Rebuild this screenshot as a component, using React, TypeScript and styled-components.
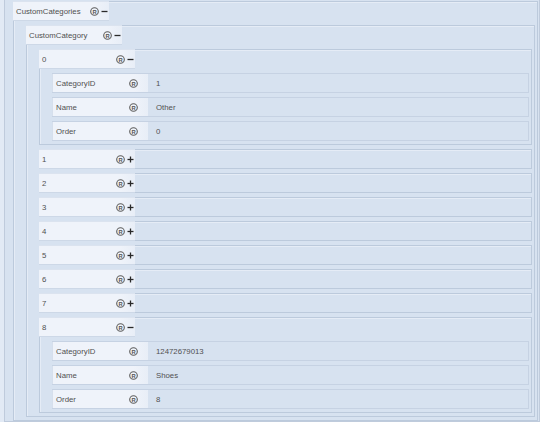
import React from "react";
import styled, { createGlobalStyle } from "styled-components";

const Global = createGlobalStyle`
  html, body { margin: 0; padding: 0; }
  body {
    background: #e2eaf5;
    font-family: "Liberation Sans", Arial, sans-serif;
    width: 540px;
    height: 422px;
    overflow: hidden;
  }
`;

const Frame = styled.div`
  margin-left: 4px;
  width: 536px;
  height: 422px;
  box-sizing: border-box;
  border: 1px solid #bfcbdc;
  border-top: none;
  background: #d7e2f0;
  padding: 1px 1px 2px 8px;
`;

const Box = styled.div`
  border: 1px solid #bccadc;
  box-shadow: inset 1px 1px 0 #e5ecf6;
  background: #d7e2f0;
  display: flex;
  flex-direction: column;
`;

const Header = styled.div`
  height: 20px;
  margin: -1px 0 -1px -1px;
  display: flex;
  position: relative;
`;

const Cell = styled.div`
  width: 96px;
  height: 100%;
  box-sizing: border-box;
  flex: none;
  display: flex;
  align-items: center;
  background: linear-gradient(to right, #eff3fa 0%, #eff3fa 85%, #e8eef7 100%);
  border-top: 1px solid #dbe3ef;
  border-bottom: 1px solid #cdd8e7;
`;

const Label = styled.span`
  flex: 1;
  padding-left: 3px;
  font-size: 7.8px;
  color: #505050;
  white-space: nowrap;
  overflow: hidden;
`;

const Slot = styled.span`
  width: 10px;
  flex: none;
  display: flex;
  align-items: center;
  justify-content: center;
`;

const Children = styled.div`
  display: flex;
  flex-direction: column;
  gap: 4px;
  padding: 5px 2px 3px 12px;
`;

const Leaf = styled.div`
  height: 20px;
  box-sizing: border-box;
  display: flex;
  border: 1px solid #c6d2e3;
  border-left: none;
  background: linear-gradient(to right, #e0e9f4 0px, #d7e2f0 12px, #d7e2f0 100%);
`;

const LeafCell = styled(Cell)`
  border-top: none;
  border-bottom: none;
  border-left: 1px solid #d6dfec;
`;

const Value = styled.span`
  display: flex;
  align-items: center;
  padding-left: 8px;
  font-size: 7.8px;
  color: #505050;
`;

const RegIcon = () => (
  <svg width="9" height="9" viewBox="0 0 9 9">
    <circle cx="4.5" cy="4.5" r="3.8" fill="none" stroke="#5e5e5e" strokeWidth="1.1" />
    <text
      x="4.6"
      y="6.6"
      fontSize="5.8"
      fontWeight="bold"
      textAnchor="middle"
      fill="#555"
      fontFamily="Liberation Sans, Arial, sans-serif"
    >
      R
    </text>
  </svg>
);

const Toggle = ({ open }: { open: boolean }) => (
  <svg width="7" height="7" viewBox="0 0 7 7">
    <path d="M0.5 3.5H6.5" stroke="#2a2a2a" strokeWidth="1.3" />
    {!open && <path d="M3.5 0.5V6.5" stroke="#2a2a2a" strokeWidth="1.3" />}
  </svg>
);

type TreeNode = {
  label: string;
  value?: string;
  open?: boolean;
  children?: TreeNode[];
};

const item = (id: string, cid: string, name: string, order: string): TreeNode => ({
  label: id,
  open: true,
  children: [
    { label: "CategoryID", value: cid },
    { label: "Name", value: name },
    { label: "Order", value: order },
  ],
});

const tree: TreeNode = {
  label: "CustomCategories",
  open: true,
  children: [
    {
      label: "CustomCategory",
      open: true,
      children: [
        item("0", "1", "Other", "0"),
        ...["1", "2", "3", "4", "5", "6", "7"].map((n) => ({ label: n, open: false, children: [] })),
        item("8", "12472679013", "Shoes", "8"),
      ],
    },
  ],
};

const Node = ({ node }: { node: TreeNode }) => {
  if (node.value !== undefined) {
    return (
      <Leaf>
        <LeafCell>
          <Label>{node.label}</Label>
          <Slot>
            <RegIcon />
          </Slot>
          <Slot />
        </LeafCell>
        <Value>{node.value}</Value>
      </Leaf>
    );
  }
  return (
    <Box>
      <Header>
        <Cell>
          <Label>{node.label}</Label>
          <Slot>
            <RegIcon />
          </Slot>
          <Slot>
            <Toggle open={!!node.open} />
          </Slot>
        </Cell>
      </Header>
      {node.open && node.children && (
        <Children>
          {node.children.map((c, i) => (
            <Node key={i} node={c} />
          ))}
        </Children>
      )}
    </Box>
  );
};

export default function App() {
  return (
    <>
      <Global />
      <Frame>
        <Node node={tree} />
      </Frame>
    </>
  );
}
